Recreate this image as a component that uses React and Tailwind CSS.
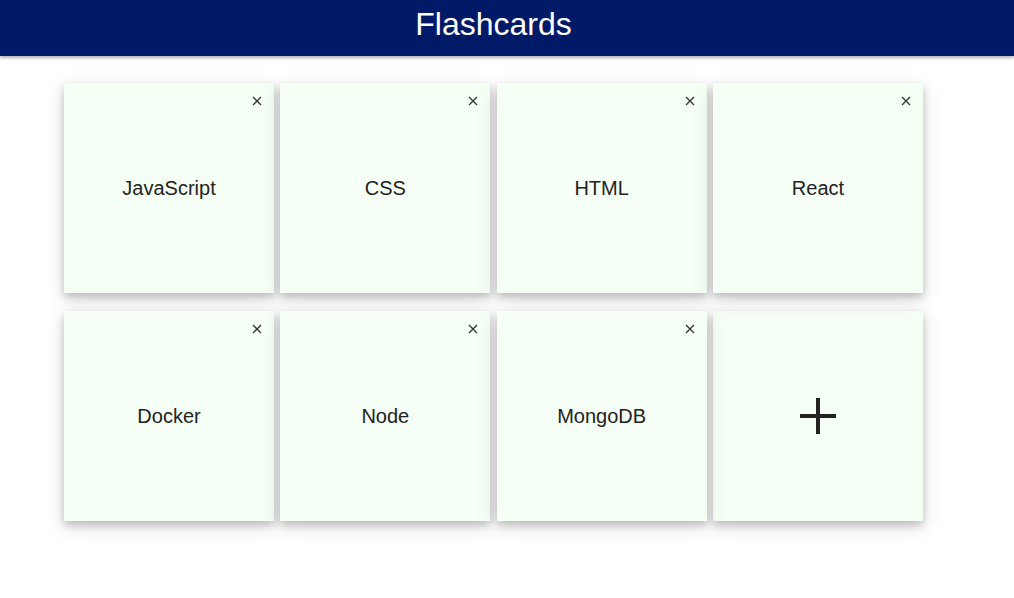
import React from 'react';

const decks = ['JavaScript', 'CSS', 'HTML', 'React', 'Docker', 'Node', 'MongoDB'];

function CloseIcon() {
  return (
    <svg width="10" height="10" viewBox="0 0 10 10" className="text-[#333]">
      <path d="M1 1 L9 9 M9 1 L1 9" stroke="currentColor" strokeWidth="1.3" fill="none" />
    </svg>
  );
}

function DeckCard({ title }) {
  return (
    <div className="relative w-[210px] h-[210px] bg-[#f6fff6] shadow-[0_4px_8px_0_rgba(0,0,0,0.2),0_6px_20px_0_rgba(0,0,0,0.12)] flex items-center justify-center">
      <button className="absolute top-[13px] right-[12px] p-0 leading-none">
        <CloseIcon />
      </button>
      <span className="text-[20px] text-[#222]">{title}</span>
    </div>
  );
}

function AddCard() {
  return (
    <div className="w-[210px] h-[210px] bg-[#f6fff6] shadow-[0_4px_8px_0_rgba(0,0,0,0.2),0_6px_20px_0_rgba(0,0,0,0.12)] flex items-center justify-center">
      <svg width="36" height="36" viewBox="0 0 36 36" className="text-[#222]">
        <path d="M18 0 V36 M0 18 H36" stroke="currentColor" strokeWidth="4" fill="none" />
      </svg>
    </div>
  );
}

export default function App() {
  return (
    <div className="min-h-[598px] bg-white font-['Liberation_Sans',Arial,sans-serif]">
      <header className="h-[56px] bg-[#001a68] shadow-[0_2px_3px_rgba(0,0,0,0.3)]">
        <div className="w-[987px] h-full flex items-center justify-center">
          <h1 className="text-[32px] text-white leading-none -mt-[8px]">Flashcards</h1>
        </div>
      </header>
      <main className="w-[987px] pt-[27px] pl-[64px]">
        <div className="grid grid-cols-[repeat(4,210px)] gap-x-[6.33px] gap-y-[18px]">
          {decks.map((d) => (
            <DeckCard key={d} title={d} />
          ))}
          <AddCard />
        </div>
      </main>
    </div>
  );
}
